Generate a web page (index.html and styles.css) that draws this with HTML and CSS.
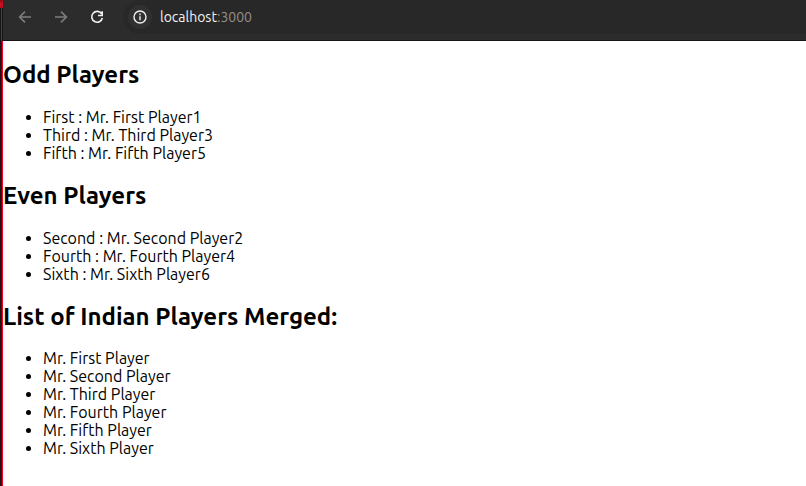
FILE: index.html
```html
<!DOCTYPE html>
<html lang="en">
<head>
<meta charset="utf-8">
<title>Players</title>
<link rel="stylesheet" href="styles.css">
</head>
<body>
<div class="edge"><div class="edge-top"></div><div class="edge-mid"></div><div class="edge-low"></div></div>
<div class="window">
  <header class="toolbar">
    <svg class="icon dim" viewBox="0 0 16 16"><path d="M14 8H2.8M8 2.6 2.6 8 8 13.4"/></svg>
    <svg class="icon dim" viewBox="0 0 16 16"><path d="M2 8h11.2M8 2.6 13.4 8 8 13.4"/></svg>
    <svg class="icon" viewBox="0 0 16 16"><path d="M12.6 4.7A5.4 5.4 0 1 0 13.4 9M13.2 2.3v4.2H9"/></svg>
    <div class="address">
      <span class="info"><svg class="icon" viewBox="0 0 16 16"><circle cx="8" cy="8" r="6"/><path d="M8 7.2v4M8 4.6v1.6"/></svg></span>
      <span class="url">localhost<span class="port">:3000</span></span>
    </div>
  </header>
  <main>
    <h2>Odd Players</h2>
    <ul>
      <li>First : Mr. First Player1</li>
      <li>Third : Mr. Third Player3</li>
      <li>Fifth : Mr. Fifth Player5</li>
    </ul>
    <h2>Even Players</h2>
    <ul>
      <li>Second : Mr. Second Player2</li>
      <li>Fourth : Mr. Fourth Player4</li>
      <li>Sixth : Mr. Sixth Player6</li>
    </ul>
    <h2 class="merged">List of Indian Players Merged:</h2>
    <ul>
      <li>Mr. First Player</li>
      <li>Mr. Second Player</li>
      <li>Mr. Third Player</li>
      <li>Mr. Fourth Player</li>
      <li>Mr. Fifth Player</li>
      <li>Mr. Sixth Player</li>
    </ul>
  </main>
</div>
</body>
</html>
```
FILE: styles.css
```css
* { box-sizing: border-box; }
body {
  margin: 0;
  height: 486px;
  display: flex;
  overflow: hidden;
  background: #fff;
  color: #000;
  font-family: Ubuntu, "Noto Sans", sans-serif;
}
.edge { width: 3px; display: flex; flex-direction: column; }
.edge-top { height: 8px; background: linear-gradient(#8c0c16, #d01020 4px, #b00c1a); }
.edge-mid { height: 33px; background: linear-gradient(90deg, #151515 1px, #4a4545 1px 2px, #181414 2px); }
.edge-low { flex: 1; background: linear-gradient(90deg, #241012 1px, #5a0c16 1px 2px, #f00520 2px); }
.window { flex: 1; }
.toolbar {
  height: 41px;
  padding: 0 0 7px 14px;
  display: flex;
  align-items: center;
  background: #2c2c2c;
  border-bottom: 1px solid #151515;
}
.icon {
  width: 16px;
  height: 16px;
  margin-right: 20px;
  fill: none;
  stroke: #f0f0f0;
  stroke-width: 1.6;
}
.dim { stroke: #7d7d7d; }
.address {
  flex: 1;
  height: 34px;
  margin-left: -2px;
  padding-left: 5px;
  display: flex;
  align-items: center;
  border-radius: 17px 0 0 17px;
  background: #282828;
}
.info {
  width: 24px;
  height: 24px;
  display: flex;
  align-items: center;
  justify-content: center;
  border-radius: 50%;
  background: #303030;
}
.info .icon { margin: 0; stroke-width: 1.4; }
.url { margin-left: 8px; font-size: 14px; color: #f2f2f2; }
.port { color: #958e88; }
main { padding-top: 20px; }
h2 {
  margin: 0 0 20px;
  font-size: 24px;
  font-weight: 700;
  line-height: 27px;
}
h2.merged { margin-bottom: 19px; }
ul { margin: 0 0 20px; padding-left: 40px; font-size: 16px; line-height: 18px; }
```
